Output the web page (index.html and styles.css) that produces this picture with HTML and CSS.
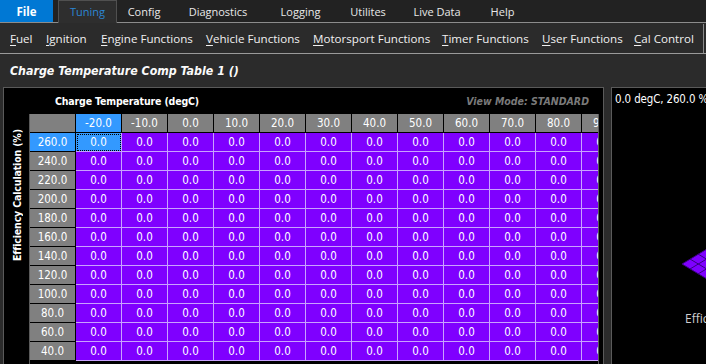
FILE: index.html
```html
<!DOCTYPE html>
<html>
<head>
<meta charset="utf-8">
<link rel="stylesheet" href="styles.css">
</head>
<body>
<div class="tabs">
  <div class="tab tab-file">File</div>
  <div class="tab tab-tuning">Tuning</div>
  <div class="tab tab-config">Config</div>
  <div class="tab tab-diag">Diagnostics</div>
  <div class="tab tab-log">Logging</div>
  <div class="tab tab-util">Utilites</div>
  <div class="tab tab-live">Live Data</div>
  <div class="tab tab-help">Help</div>
</div>
<div class="menu">
  <span class="mi mi-fuel"><u>F</u>uel</span>
  <span class="mi mi-ign"><u>I</u>gnition</span>
  <span class="mi mi-eng"><u>E</u>ngine Functions</span>
  <span class="mi mi-veh"><u>V</u>ehicle Functions</span>
  <span class="mi mi-mot"><u>M</u>otorsport Functions</span>
  <span class="mi mi-tim"><u>T</u>imer Functions</span>
  <span class="mi mi-usr"><u>U</u>ser Functions</span>
  <span class="mi mi-cal"><u>C</u>al Control</span>
  <span class="menu-sep"></span>
</div>
<div class="title">Charge Temperature Comp Table 1 ()</div>
<div class="main">
  <div class="table-panel">
    <div class="panel-head">
      <span class="axis-x">Charge Temperature (degC)</span>
      <span class="viewmode">View Mode: STANDARD</span>
    </div>
    <div class="panel-body">
      <div class="axis-y"><span class="axis-y-text">Efficiency Calculation (%)</span></div>
      <div class="grid-wrap">
        <div class="grid">
          <div class="c hd"></div><div class="c hd sel">-20.0</div><div class="c hd">-10.0</div><div class="c hd">0.0</div><div class="c hd">10.0</div><div class="c hd">20.0</div><div class="c hd">30.0</div><div class="c hd">40.0</div><div class="c hd">50.0</div><div class="c hd">60.0</div><div class="c hd">70.0</div><div class="c hd">80.0</div><div class="c hd">90.0</div>
          <div class="c hd sel">260.0</div><div class="c v cur">0.0</div><div class="c v">0.0</div><div class="c v">0.0</div><div class="c v">0.0</div><div class="c v">0.0</div><div class="c v">0.0</div><div class="c v">0.0</div><div class="c v">0.0</div><div class="c v">0.0</div><div class="c v">0.0</div><div class="c v">0.0</div><div class="c v">0.0</div>
          <div class="c hd">240.0</div><div class="c v">0.0</div><div class="c v">0.0</div><div class="c v">0.0</div><div class="c v">0.0</div><div class="c v">0.0</div><div class="c v">0.0</div><div class="c v">0.0</div><div class="c v">0.0</div><div class="c v">0.0</div><div class="c v">0.0</div><div class="c v">0.0</div><div class="c v">0.0</div>
          <div class="c hd">220.0</div><div class="c v">0.0</div><div class="c v">0.0</div><div class="c v">0.0</div><div class="c v">0.0</div><div class="c v">0.0</div><div class="c v">0.0</div><div class="c v">0.0</div><div class="c v">0.0</div><div class="c v">0.0</div><div class="c v">0.0</div><div class="c v">0.0</div><div class="c v">0.0</div>
          <div class="c hd">200.0</div><div class="c v">0.0</div><div class="c v">0.0</div><div class="c v">0.0</div><div class="c v">0.0</div><div class="c v">0.0</div><div class="c v">0.0</div><div class="c v">0.0</div><div class="c v">0.0</div><div class="c v">0.0</div><div class="c v">0.0</div><div class="c v">0.0</div><div class="c v">0.0</div>
          <div class="c hd">180.0</div><div class="c v">0.0</div><div class="c v">0.0</div><div class="c v">0.0</div><div class="c v">0.0</div><div class="c v">0.0</div><div class="c v">0.0</div><div class="c v">0.0</div><div class="c v">0.0</div><div class="c v">0.0</div><div class="c v">0.0</div><div class="c v">0.0</div><div class="c v">0.0</div>
          <div class="c hd">160.0</div><div class="c v">0.0</div><div class="c v">0.0</div><div class="c v">0.0</div><div class="c v">0.0</div><div class="c v">0.0</div><div class="c v">0.0</div><div class="c v">0.0</div><div class="c v">0.0</div><div class="c v">0.0</div><div class="c v">0.0</div><div class="c v">0.0</div><div class="c v">0.0</div>
          <div class="c hd">140.0</div><div class="c v">0.0</div><div class="c v">0.0</div><div class="c v">0.0</div><div class="c v">0.0</div><div class="c v">0.0</div><div class="c v">0.0</div><div class="c v">0.0</div><div class="c v">0.0</div><div class="c v">0.0</div><div class="c v">0.0</div><div class="c v">0.0</div><div class="c v">0.0</div>
          <div class="c hd">120.0</div><div class="c v">0.0</div><div class="c v">0.0</div><div class="c v">0.0</div><div class="c v">0.0</div><div class="c v">0.0</div><div class="c v">0.0</div><div class="c v">0.0</div><div class="c v">0.0</div><div class="c v">0.0</div><div class="c v">0.0</div><div class="c v">0.0</div><div class="c v">0.0</div>
          <div class="c hd">100.0</div><div class="c v">0.0</div><div class="c v">0.0</div><div class="c v">0.0</div><div class="c v">0.0</div><div class="c v">0.0</div><div class="c v">0.0</div><div class="c v">0.0</div><div class="c v">0.0</div><div class="c v">0.0</div><div class="c v">0.0</div><div class="c v">0.0</div><div class="c v">0.0</div>
          <div class="c hd">80.0</div><div class="c v">0.0</div><div class="c v">0.0</div><div class="c v">0.0</div><div class="c v">0.0</div><div class="c v">0.0</div><div class="c v">0.0</div><div class="c v">0.0</div><div class="c v">0.0</div><div class="c v">0.0</div><div class="c v">0.0</div><div class="c v">0.0</div><div class="c v">0.0</div>
          <div class="c hd">60.0</div><div class="c v">0.0</div><div class="c v">0.0</div><div class="c v">0.0</div><div class="c v">0.0</div><div class="c v">0.0</div><div class="c v">0.0</div><div class="c v">0.0</div><div class="c v">0.0</div><div class="c v">0.0</div><div class="c v">0.0</div><div class="c v">0.0</div><div class="c v">0.0</div>
          <div class="c hd">40.0</div><div class="c v">0.0</div><div class="c v">0.0</div><div class="c v">0.0</div><div class="c v">0.0</div><div class="c v">0.0</div><div class="c v">0.0</div><div class="c v">0.0</div><div class="c v">0.0</div><div class="c v">0.0</div><div class="c v">0.0</div><div class="c v">0.0</div><div class="c v">0.0</div>
        </div>
      </div>
    </div>
  </div>
  <div class="panel-gap"></div>
  <div class="plot-panel">
    <div class="readout">0.0 degC, 260.0 %</div>
    <svg class="surface" width="120" height="80" viewBox="0 0 120 80">
      <polygon points="0,32 40,8 80,32 40,56" fill="#7f00ff" stroke="#3a0080" stroke-width="1"/>
      <line x1="8" y1="27" x2="48" y2="51" stroke="#3a0080" stroke-width="1"/>
      <line x1="16" y1="22" x2="56" y2="46" stroke="#3a0080" stroke-width="1"/>
      <line x1="8" y1="37" x2="48" y2="13" stroke="#3a0080" stroke-width="1"/>
      <line x1="16" y1="42" x2="56" y2="18" stroke="#3a0080" stroke-width="1"/>
    </svg>
    <div class="plot-label">Efficiency Calculation (%)</div>
  </div>
</div>
</body>
</html>
```

FILE: styles.css
```css
* { box-sizing: border-box; margin: 0; padding: 0; }
html, body { width: 706px; height: 364px; overflow: hidden; background: #2b2b2b; }
body { font-family: "Open Sans", "Noto Sans", sans-serif; color: #fff; }

.tabs { display: flex; height: 23px; background: #222222; border-bottom: 1px solid #8c8c8c; }
.tab { height: 22px; display: flex; align-items: center; justify-content: center; font-size: 11px; color: #e8e8e8; }
.tab-file { width: 53px; background: #0078d4; color: #fff; font-weight: bold; font-size: 11.5px; }
.tab-tuning { width: 59px; margin-left: 5px; height: 23px; margin-bottom: -1px; background: #2e2e2e; border: 1px solid #505050; border-bottom: none; color: #2b86d4; padding-bottom: 1px; }
.tab-config { width: 54px; }
.tab-diag { width: 94px; }
.tab-log { width: 71px; }
.tab-util { width: 64px; }
.tab-live { width: 74px; }
.tab-help { width: 57px; }

.menu { display: flex; align-items: center; height: 31px; padding-left: 10px; background: #2b2b2b; border-bottom: 1px solid #9a9a9a; font-size: 11.6px; color: #f0f0f0; }
.mi { display: block; white-space: nowrap; }
.mi u { text-decoration-thickness: 1px; text-underline-offset: 2px; }
.mi-fuel { width: 36px; }
.mi-ign { width: 55px; }
.mi-eng { width: 105px; }
.mi-veh { width: 107px; }
.mi-mot { width: 129px; }
.mi-tim { width: 100px; }
.mi-usr { width: 92px; }
.mi-cal { width: 69px; }
.menu-sep { width: 1px; height: 29px; background: #8a8a8a; }

.title { height: 33px; display: flex; align-items: center; padding-left: 10px; font-family: "DejaVu Sans Condensed", "DejaVu Sans", sans-serif; font-stretch: condensed; font-weight: bold; font-style: italic; font-size: 12.3px; color: #fafafa; background: #2b2b2b; }

.main { display: flex; height: 277px; }
.table-panel { width: 601px; margin-left: 3px; background: #000; border: 1px solid #5a5a5a; border-bottom: none; display: flex; flex-direction: column; overflow: hidden; }
.panel-head { height: 26px; display: flex; align-items: center; justify-content: space-between; padding-left: 51px; padding-right: 14px; }
.axis-x { font-family: "DejaVu Sans Condensed", "DejaVu Sans", sans-serif; font-stretch: condensed; font-weight: bold; font-size: 10.5px; letter-spacing: -0.15px; color: #fff; }
.viewmode { font-family: "DejaVu Sans Condensed", "DejaVu Sans", sans-serif; font-stretch: condensed; font-weight: bold; font-style: italic; font-size: 10.5px; color: #7a7a7a; }

.panel-body { display: flex; flex: 1; }
.axis-y { width: 25px; padding-top: 16px; display: flex; justify-content: center; }
.axis-y-text { writing-mode: vertical-rl; transform: rotate(180deg); font-family: "DejaVu Sans Condensed", "DejaVu Sans", sans-serif; font-stretch: condensed; font-weight: bold; font-size: 10.5px; letter-spacing: -0.15px; height: 131px; white-space: nowrap; }
.grid-wrap { width: 570px; border-left: 1px solid #5a5a5a; border-right: 1px solid #5a5a5a; overflow: hidden; }
.grid { display: grid; grid-template-columns: repeat(13, 46px); grid-auto-rows: 19px; width: 598px; font-family: "DejaVu Sans Condensed", "DejaVu Sans", sans-serif; font-stretch: condensed; font-size: 11.5px; }
.c { display: flex; align-items: center; justify-content: center; color: #fff; }
.hd { background: #808080; border-right: 1px solid #000; border-bottom: 1px solid #000; }
.v { background: #7f00ff; border-right: 1px solid #c9a2ff; border-bottom: 1px solid #c9a2ff; }
.sel { background: #3399ff; }
.cur { background: #3399ff; outline: 1px dotted #000; outline-offset: -2px; }

.panel-gap { width: 7px; background: #2b2b2b; }
.plot-panel { flex: 1; position: relative; background: #000; border-left: 1px solid #5a5a5a; border-top: 1px solid #5a5a5a; overflow: hidden; }
.readout { padding: 4px 0 0 3px; font-family: "DejaVu Sans Condensed", "DejaVu Sans", sans-serif; font-stretch: condensed; font-size: 11.4px; letter-spacing: -0.1px; color: #fff; white-space: nowrap; }
.surface { position: absolute; left: 70px; top: 144px; }
.plot-label { position: absolute; left: 73px; top: 222px; font-family: "Open Sans", sans-serif; font-size: 12px; color: #d0d0d0; white-space: nowrap; }
```
